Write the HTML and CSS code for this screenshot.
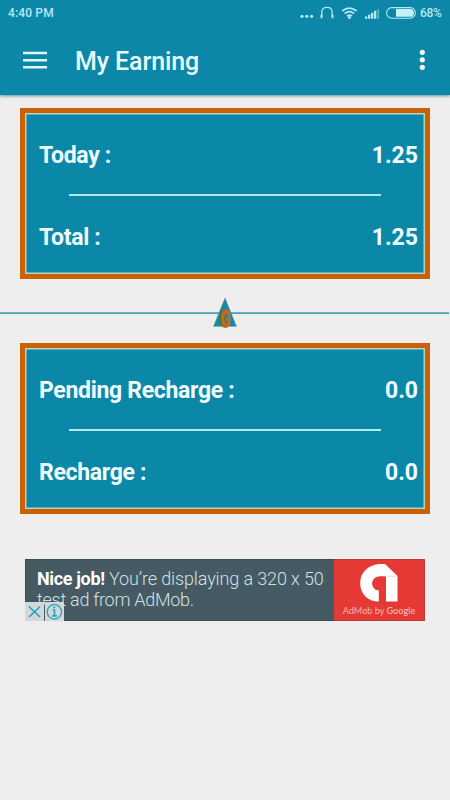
FILE: index.html
```html
<!DOCTYPE html>
<html lang="en">
<head>
<meta charset="utf-8">
<title>My Earning</title>
<link rel="stylesheet" href="styles.css">
</head>
<body>
<header class="header">
  <div class="status">
    <span>4:40 PM</span>
    <div class="status-right">
      <svg width="85" height="16" viewBox="0 0 85 16">
        <g fill="#b5e8f2"><circle cx="3" cy="11.3" r="1.6"/><circle cx="7.8" cy="11.3" r="1.6"/><circle cx="12.6" cy="11.3" r="1.6"/></g>
        <path d="M22.8 12.5V7.5C22.8 4 24.4 2.4 28 2.4S33.2 4 33.2 7.5V12.5" fill="none" stroke="#b5e8f2" stroke-width="1.3"/>
        <path d="M21.5 10h1.8v3.2h-1.8zM32.7 10h1.8v3.2h-1.8z" fill="#b5e8f2"/>
        <g transform="translate(.8)"><path d="M42.4 6Q49.5 0.2 56.8 6M44.8 8.6Q49.6 4.7 54.4 8.6M47.1 11.1Q49.6 9 52.1 11.1" fill="none" stroke="#b5e8f2" stroke-width="1.7"/>
        <circle cx="49.6" cy="12.4" r="1.5" fill="#b5e8f2"/></g>
        <path d="M66 11.5h2.3v2.3H66zM69 9.8h2.3v4H69zM72 7.8h2.3v6H72zM75 5.7h2.3v8.1H75z" fill="#b5e8f2"/>
        <path d="M78.3 4h1.7v9.8h-1.7z" fill="#63b5ca"/>
      </svg>
      <svg width="30" height="12" viewBox="0 0 30 12">
        <rect x=".6" y=".6" width="28.8" height="10.6" rx="5.3" fill="none" stroke="#b5e8f2" stroke-width="1.1"/>
        <path d="M10 2H24a3.9 3.9 0 0 1 0 7.8H10z" fill="#c5f2f9"/>
      </svg>
      <span class="percent">68%</span>
    </div>
  </div>
  <div class="toolbar">
    <svg width="24" height="18" viewBox="0 0 24 18"><path d="M0 2.1h24M0 9.3h24M0 16.2h24" stroke="#dffaff" stroke-width="2.5"/></svg>
    <h1>My Earning</h1>
    <svg class="more" width="6" height="22" viewBox="0 0 6 22" fill="#effcff"><circle cx="3.3" cy="3.3" r="2.6"/><circle cx="3.3" cy="10.8" r="2.6"/><circle cx="3.3" cy="18.3" r="2.6"/></svg>
  </div>
</header>
<main>
  <section class="card">
    <div class="row"><span class="label">Today :</span><span>1.25</span></div>
    <div class="rule"></div>
    <div class="row"><span class="label">Total :</span><span>1.25</span></div>
  </section>
  <div class="separator">
    <svg width="450" height="32" viewBox="0 0 450 32">
      <path d="M0 15.2h449" stroke="#4b9db5" stroke-width="1.7"/>
      <path d="M225 .3L236.3 28.2H213.7z" fill="#168aa8" stroke="#547b83" stroke-width=".6"/>
      <text class="mark" transform="translate(225.2 28.5) scale(.62 1)" text-anchor="middle">G</text>
    </svg>
  </div>
  <section class="card">
    <div class="row"><span class="label">Pending Recharge :</span><span>0.0</span></div>
    <div class="rule"></div>
    <div class="row"><span class="label">Recharge :</span><span>0.0</span></div>
  </section>
  <aside class="ad">
    <div class="ad-copy"><div><b>Nice job!</b> You’re displaying a 320 x 50</div><div class="line2">test ad from AdMob.</div></div>
    <div class="brand">
      <svg width="38" height="39" viewBox="0 0 38 39">
        <path d="M19 0H25L37.5 12V37.5H26V12.3H22C15 11.5 11.8 16 12.2 20C12.5 24.2 15.5 26.3 18.8 26.5V37.5C7.5 37.5 .2 29.6 .2 19.2C.2 8.5 8 1.2 19 0Z" fill="#fff"/>
        <path d="M25 12.3h12" stroke="#ddd" stroke-width=".8"/>
      </svg>
      <span>AdMob by <b>Google</b></span>
    </div>
    <svg class="choices" width="39" height="19" viewBox="0 0 39 19">
      <path fill="#d5d8d9" d="M0 0h19v19H0zM20 0h19v19H20z"/>
      <g fill="none" stroke="#22a5c5" stroke-width="1.7"><path d="M4 4.5l11 10.5M15 4.5L4 15"/><circle cx="29.4" cy="9.8" r="7.2" stroke-width="1.3"/><path d="M27.5 8h2v5.7M27 13.8h5M28.2 5.5h2"/></g>
    </svg>
  </aside>
</main>
</body>
</html>
```
FILE: styles.css
```css
* { box-sizing: border-box; }
body { margin: 0; width: 450px; height: 800px; overflow: hidden; background: #eee; font-family: Roboto, sans-serif; }
.header { position: relative; height: 95px; background: #0d87a8; box-shadow: 0 1px 3px #668c99; color: #e6fcff; }
.status { height: 26px; display: flex; justify-content: space-between; padding: 0 8px; font-size: 12px; line-height: 26px; font-weight: 500; color: #b5e8f2; letter-spacing: .15px; }
.status-right { display: flex; align-items: center; }
.status-right svg:first-child { margin-right: 2px; }
.percent { margin-left: 4px; width: 22px; letter-spacing: -.3px; }
.toolbar { display: flex; height: 69px; align-items: center; padding: 0 25px 1px 23px; }
h1 { margin: 3px 0 0 28px; font-size: 25px; line-height: 30px; font-weight: 500; letter-spacing: -.1px; }
.more { margin-left: auto; }
main { padding: 13px 20px 0; }
.card { height: 171px; border: 5px solid #ca6108; box-shadow: inset 0 0 0 1.5px #b7d4bd; background: #0b87a8; padding: 31px 7px 0 14px; color: #f0fdff; }
.row { display: flex; height: 24px; line-height: 24px; justify-content: space-between; font-weight: 700; font-size: 23px; }
.label { letter-spacing: -.31px; }
.rule { height: 2px; width: 312px; margin: 26px 0 30px 30px; background: #b1e7ed; }
.separator { height: 32px; margin: 19px -20px 13px; }
.separator svg, .brand svg { display: block; overflow: visible; }
.mark { font: 900 23px/1 Roboto, sans-serif; fill: #c76816; stroke: #b06420; stroke-width: 1.6px; paint-order: stroke; }
.ad { position: relative; display: flex; width: 400px; height: 62px; margin: 45px 0 0 5px; background: #455a62; }
.ad-copy { width: 309px; padding: 8px 0 0 11px; font-size: 18px; line-height: 21px; font-weight: 300; letter-spacing: -.12px; color: #d1e1e4; white-space: nowrap; border: 1px solid #344d56; border-right: 0; }
.ad-copy b { font-weight: 700; color: #fff; letter-spacing: -.35px; }
.line2 { letter-spacing: -.27px; }
.brand { width: 91px; background: #e53935; display: flex; flex-direction: column; align-items: center; padding-top: 4px; font: 9.1px/15px Lato, sans-serif; color: #f7b6ad; white-space: nowrap; border: 1px solid #bd3936; border-left: 0; }
.brand b { font-weight: 600; }
.choices { position: absolute; left: 0; bottom: 0; }
```
